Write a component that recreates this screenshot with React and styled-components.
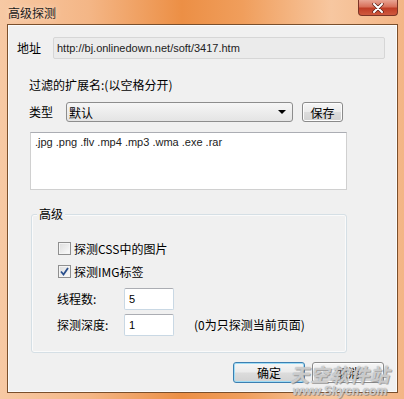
import React from 'react'
import styled, { createGlobalStyle } from 'styled-components'

const GlobalStyle = createGlobalStyle`
  html, body { margin: 0; padding: 0; }
  body {
    width: 404px;
    height: 399px;
    overflow: hidden;
    font-family: "Liberation Sans", "Noto Sans CJK SC", sans-serif;
    font-size: 12px;
    color: #000;
  }
`

const cjk = `"Noto Sans CJK SC", "Liberation Sans", sans-serif`

const Window = styled.div`
  position: relative;
  width: 404px;
  height: 399px;
  display: flex;
  flex-direction: column;
  box-sizing: border-box;
  background: linear-gradient(90deg, #f7c9a4 0%, #f4b686 22%, #ec8f45 45%, #f09e5c 60%, #f7c7a0 82%, #f3b585 100%);
`

const TitleBar = styled.div`
  height: 24px;
  display: flex;
  align-items: center;
  padding-left: 8px;
  font-family: ${cjk};
  font-size: 12px;
  color: #1a1a1a;
  text-shadow: 0 0 6px rgba(255, 255, 255, 0.6);
`

const CloseButton = styled.div`
  position: absolute;
  top: 0;
  right: 6px;
  width: 40px;
  height: 16px;
  box-sizing: border-box;
  border: 1px solid #7b3426;
  border-top: none;
  border-radius: 0 0 4px 4px;
  background: linear-gradient(#e9a594 0%, #d8705a 45%, #bf3d26 55%, #cf5a3f 100%);
  display: flex;
  align-items: center;
  justify-content: center;
`

const Client = styled.div`
  flex: 1;
  margin: 0 6px 6px 7px;
  background: #f0f0f0;
  border: 1px solid #7a4f2c;
  box-shadow: inset 0 0 0 1px #fbfbfb;
  display: flex;
  flex-direction: column;
  padding-top: 12px;
  font-family: ${cjk};
`

const AddressRow = styled.div`
  height: 22px;
  display: flex;
  align-items: center;
  padding-left: 9px;
`

const Label = styled.span`
  width: ${p => p.$w || 'auto'}px;
  flex-shrink: 0;
  font-size: 12px;
  line-height: 14px;
  margin-left: ${p => p.$ml || 0}px;
`

const ReadOnlyBox = styled.div`
  width: 332px;
  height: 22px;
  box-sizing: border-box;
  border: 1px solid #d6d6d6;
  border-radius: 2px;
  background: #ebebeb;
  padding-left: 3px;
  display: flex;
  align-items: center;
  font-family: "Liberation Sans", sans-serif;
  font-size: 11px;
  color: #222;
`

const SectionLabel = styled.div`
  margin-top: 19px;
  padding-left: 21px;
  height: 14px;
  line-height: 14px;
  font-size: 12px;
`

const TypeRow = styled.div`
  margin-top: 10px;
  height: 20px;
  display: flex;
  align-items: center;
  padding-left: 21px;
`

const Select = styled.div`
  width: 227px;
  height: 20px;
  box-sizing: border-box;
  border: 1px solid #8d8d8d;
  border-radius: 3px;
  background: linear-gradient(#f6f6f6, #e4e4e4);
  display: flex;
  align-items: center;
  justify-content: space-between;
  padding: 0 6px 0 2px;
  font-size: 12px;
`

const Arrow = styled.span`
  width: 0;
  height: 0;
  border-left: 4px solid transparent;
  border-right: 4px solid transparent;
  border-top: 4px solid #000;
`

const Button = styled.button`
  width: ${p => p.$w}px;
  height: ${p => p.$h}px;
  margin-left: ${p => p.$ml || 0}px;
  box-sizing: border-box;
  border: 1px solid ${p => (p.$default ? '#3c7fb1' : '#8a8a8a')};
  border-radius: 3px;
  background: linear-gradient(#f6f6f6 0%, #ebebeb 48%, #dcdcdc 52%, #d2d2d2 100%);
  box-shadow: inset 0 0 0 1px ${p => (p.$default ? '#9fdcf5' : '#fcfcfc')};
  font-family: ${cjk};
  font-size: 12px;
  color: #000;
  padding: 0;
  display: flex;
  align-items: center;
  justify-content: center;
`

const TextArea = styled.div`
  margin: 10px 0 0 22px;
  width: 317px;
  height: 58px;
  box-sizing: border-box;
  border: 1px solid #d0d0d0;
  border-top-color: #abadb3;
  background: #fff;
  padding: 3px 4px;
  font-family: "Liberation Sans", sans-serif;
  font-size: 11px;
  color: #222;
`

const Group = styled.div`
  position: relative;
  margin: 24px 0 0 23px;
  width: 316px;
  height: 139px;
  box-sizing: border-box;
  border: 1px solid #d5dfe5;
  border-radius: 3px;
  box-shadow: inset 0 0 0 1px #fafafa;
  padding: 23px 0 0 25px;
  display: flex;
  flex-direction: column;
`

const Legend = styled.span`
  position: absolute;
  top: -8px;
  left: 5px;
  padding: 0 2px;
  background: #f0f0f0;
  font-size: 12px;
  line-height: 14px;
`

const CheckRow = styled.label`
  height: 20px;
  display: flex;
  align-items: center;
  margin-top: ${p => p.$mt || 0}px;
  padding-left: 1px;
  font-size: 12px;
`

const Box = styled.span`
  width: 13px;
  height: 13px;
  box-sizing: border-box;
  border: 1px solid #8f8f8f;
  background: linear-gradient(135deg, #dcdcdc, #fbfbfb);
  box-shadow: inset 0 0 0 1px #f4f4f4;
  margin-right: 3px;
  display: flex;
  align-items: center;
  justify-content: center;
`

const FieldRow = styled.div`
  height: 22px;
  display: flex;
  align-items: center;
  margin-top: ${p => p.$mt}px;
`

const NumberBox = styled.div`
  width: 50px;
  height: 22px;
  box-sizing: border-box;
  border: 1px solid #c9d8e4;
  border-top-color: #abadb3;
  border-radius: 2px;
  background: #fff;
  padding-left: 4px;
  display: flex;
  align-items: center;
  font-family: "Liberation Sans", sans-serif;
  font-size: 11px;
`

const ButtonRow = styled.div`
  margin-top: 9px;
  display: flex;
  justify-content: flex-end;
  padding-right: 13px;
`

const Watermark = styled.div`
  position: absolute;
  right: 14px;
  bottom: 2px;
  display: flex;
  flex-direction: column;
  align-items: center;
  pointer-events: none;
  color: rgba(255, 255, 255, 0.55);
  font-style: italic;
  font-weight: bold;
  text-shadow: 0 0 1px #8d8d8d, 1px 1px 0 rgba(120, 120, 120, 0.6);
`

const MarkBig = styled.span`
  font-family: ${cjk};
  font-size: 19px;
  letter-spacing: 1px;
  line-height: 22px;
`

const MarkSmall = styled.span`
  font-family: "Liberation Sans", sans-serif;
  font-size: 12px;
  line-height: 12px;
`

const Check = () => (
  <svg width="9" height="9" viewBox="0 0 9 9">
    <path d="M1 4.5 L3.5 7.5 L8 1" fill="none" stroke="#2a4f8c" strokeWidth="1.8" />
  </svg>
)

export default function App () {
  return (
    <Window>
      <GlobalStyle />
      <TitleBar>高级探测</TitleBar>
      <CloseButton>
        <svg width="12" height="10" viewBox="0 0 12 10">
          <path d="M2 1 L10 9 M10 1 L2 9" stroke="#5a2018" strokeWidth="3.4" strokeLinecap="round" />
          <path d="M2 1 L10 9 M10 1 L2 9" stroke="#fff" strokeWidth="2" strokeLinecap="round" />
        </svg>
      </CloseButton>
      <Client>
        <AddressRow>
          <Label $w={36}>地址</Label>
          <ReadOnlyBox>http://bj.onlinedown.net/soft/3417.htm</ReadOnlyBox>
        </AddressRow>
        <SectionLabel>过滤的扩展名:(以空格分开)</SectionLabel>
        <TypeRow>
          <Label $w={37}>类型</Label>
          <Select>
            <span>默认</span>
            <Arrow />
          </Select>
          <Button $w={41} $h={20} $ml={9}>保存</Button>
        </TypeRow>
        <TextArea>.jpg .png .flv .mp4 .mp3 .wma .exe .rar</TextArea>
        <Group>
          <Legend>高级</Legend>
          <CheckRow>
            <Box />
            探测CSS中的图片
          </CheckRow>
          <CheckRow $mt={3}>
            <Box><Check /></Box>
            探测IMG标签
          </CheckRow>
          <FieldRow $mt={7}>
            <Label $w={67}>线程数:</Label>
            <NumberBox>5</NumberBox>
          </FieldRow>
          <FieldRow $mt={4}>
            <Label $w={67}>探测深度:</Label>
            <NumberBox>1</NumberBox>
            <Label $ml={20}>(0为只探测当前页面)</Label>
          </FieldRow>
        </Group>
        <ButtonRow>
          <Button $w={72} $h={21} $default>确定</Button>
          <Button $w={72} $h={21} $ml={7}>取消</Button>
        </ButtonRow>
      </Client>
      <Watermark>
        <MarkBig>天空软件站</MarkBig>
        <MarkSmall>www.Skycn.com</MarkSmall>
      </Watermark>
    </Window>
  )
}
